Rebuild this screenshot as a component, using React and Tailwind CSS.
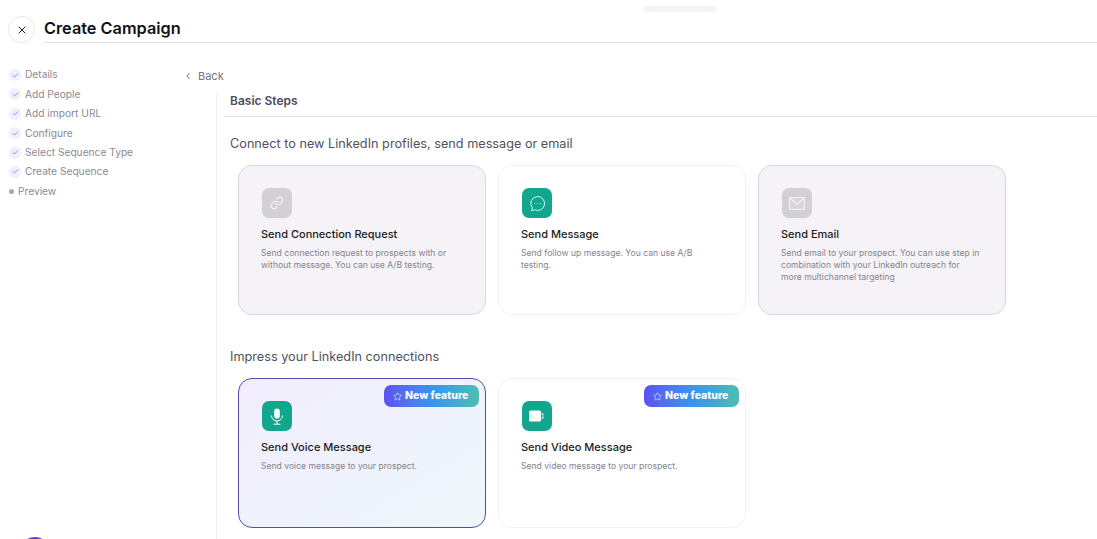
import React from 'react';
import { X, ChevronLeft, Check, Link, Star } from 'lucide-react';

const steps = ['Details', 'Add People', 'Add import URL', 'Configure', 'Select Sequence Type', 'Create Sequence'];

function MessageIcon() {
  return (
    <svg width="17" height="17" viewBox="0 0 17 17" fill="none" stroke="#d9f5f0" strokeWidth="1">
      <path d="M8.5 1.5a7 7 0 1 1-3 13.3L2.6 15.6l.7-2.8A7 7 0 0 1 8.5 1.5z" strokeLinejoin="round" />
      <circle cx="5.6" cy="8.5" r="0.5" fill="#fff" stroke="none" />
      <circle cx="8.5" cy="8.5" r="0.5" fill="#fff" stroke="none" />
      <circle cx="11.4" cy="8.5" r="0.5" fill="#fff" stroke="none" />
    </svg>
  );
}

function MailIcon() {
  return (
    <svg width="16" height="13" viewBox="0 0 16 13" fill="none" stroke="#f3f1f4" strokeWidth="1.2">
      <rect x="0.6" y="0.6" width="14.8" height="11.8" fill="#efedf0" fillOpacity="0.15" />
      <path d="M1 1.2l7 6 7-6" />
    </svg>
  );
}

function MicIcon() {
  return (
    <svg width="14" height="17" viewBox="0 0 14 17" fill="none" stroke="#fff" strokeWidth="1">
      <rect x="4.2" y="0.5" width="5.6" height="10" rx="2.8" fill="#fff" stroke="none" />
      <path d="M1.5 7.5a5.5 5.5 0 0 0 11 0M7 13v3M3.5 16.2h7" />
    </svg>
  );
}

function VideoIcon() {
  return (
    <svg width="16" height="12" viewBox="0 0 16 12" fill="none">
      <rect x="0" y="0.5" width="12" height="11" rx="1.5" fill="#fff" />
      <path d="M12 4.5l2-1.2v5.4l-2-1.2" stroke="#d9f5f0" strokeWidth="0.9" />
    </svg>
  );
}

function LinkIcon() {
  return <Link size={14} strokeWidth={2} color="#f5f3f7" />;
}

function Badge() {
  return (
    <div className="absolute top-[6px] right-[6px] h-[22px] w-[95px] rounded-[7px] bg-gradient-to-r from-[#5a51f0] via-[#3b93ee] to-[#4fbdb0] flex items-center pl-[9px] gap-[3px] text-white">
      <Star size={9} strokeWidth={1.5} />
      <span className="text-[10.5px] font-extrabold">New feature</span>
    </div>
  );
}

function Card({ icon: Icon, title, desc, tone, badge }) {
  const toneClass = tone === 'disabled'
    ? 'bg-[#f5f3f7] border-[#d9d6dc]'
    : tone === 'selected'
      ? 'bg-gradient-to-br from-[#f2edfd] to-[#edf7fb] border-[#5b48b8]'
      : 'bg-white border-[#f3f1f5]';
  return (
    <div className={`relative w-[248px] h-[150px] shrink-0 border rounded-[14px] pt-[22px] pl-[22px] pr-[24px] ${toneClass}`}>
      {badge && <Badge />}
      <div className={`ml-[1px] w-[30px] h-[30px] rounded-[7px] flex items-center justify-center ${tone === 'disabled' ? 'bg-[#d2d0d3]' : 'bg-[#12a68f]'}`}>
        <Icon />
      </div>
      <div className="mt-[8px] text-[11px] leading-[16px] font-medium text-[#1b1b22]">{title}</div>
      <p className="mt-[5px] text-[8.6px] leading-[12px] text-[#85838c]">{desc}</p>
    </div>
  );
}

export default function App() {
  return (
    <div className="relative h-[539px] w-[1097px] overflow-hidden bg-white flex flex-col" style={{ fontFamily: 'Inter, "Noto Sans", sans-serif' }}>
      <div className="absolute left-[643px] top-[6px] w-[74px] h-[6px] rounded-full bg-[#f5f3f7]" />

      <header className="flex items-start pl-[8px] pt-[16px] h-[44px] shrink-0">
        <button className="w-[27px] h-[27px] rounded-full border border-[#e8e6ec] flex items-center justify-center text-[#1b1b22] shrink-0">
          <X size={12} strokeWidth={2} />
        </button>
        <div className="ml-[9px] flex-1 h-[27px] border-b border-[#e2e2e4] text-[16.3px] leading-[24px] font-semibold text-[#111116]">
          Create Campaign
        </div>
      </header>

      <div className="flex flex-1 min-h-0">
        <aside className="w-[185px] shrink-0 pl-[9px] pt-[25px] flex flex-col">
          <ul className="flex flex-col gap-[7.4px]">
            {steps.map((s) => (
              <li key={s} className="flex items-center h-[12px] gap-[4px] text-[10.2px] text-[#8c8a93]">
                <span className="w-[12px] h-[12px] rounded-full bg-[#eef0fd] flex items-center justify-center text-[#5b72d8]">
                  <Check size={7} strokeWidth={2.5} />
                </span>
                {s}
              </li>
            ))}
            <li className="flex items-center h-[12px] gap-[4px] text-[10.2px] text-[#8c8a93]">
              <span className="w-[5px] h-[5px] rounded-full bg-[#a9a8ae]" />
              Preview
            </li>
          </ul>
          <div className="mt-auto ml-[10px] -mb-[30px] w-[32px] h-[32px] rounded-full bg-[#6d3bd0]" />
        </aside>

        <main className="flex-1 min-w-0 flex flex-col">
          <div className="flex items-center h-[14px] mt-[25px] -ml-[2px] text-[11px] text-[#77757f] gap-[5px]">
            <ChevronLeft size={10} strokeWidth={2} className="text-[#4a4c5d]" />
            Back
          </div>
          <div className="flex-1 min-h-0 ml-[31px] mt-[11px] border-l border-[#f1f0f3]">
            <div className="ml-[7px] h-[23px] border-b border-[#e4e4e7] pl-[6px] pt-[1px] text-[12px] leading-[12px] font-semibold text-[#4a4c5d]">
              Basic Steps
            </div>
            <div className="pl-[13px] pt-[18px]">
              <h2 className="text-[12.7px] leading-[18px] font-normal text-[#4f5160]">Connect to new LinkedIn profiles, send message or email</h2>
              <div className="flex gap-[12px] mt-[12px] ml-[8px]">
                <Card tone="disabled" icon={LinkIcon} title="Send Connection Request" desc="Send connection request to prospects with or without message. You can use A/B testing." />
                <Card icon={MessageIcon} title="Send Message" desc="Send follow up message. You can use A/B testing." />
                <Card tone="disabled" icon={MailIcon} title="Send Email" desc="Send email to your prospect. You can use step in combination with your LinkedIn outreach for more multichannel targeting" />
              </div>
              <h2 className="mt-[33px] text-[12.7px] leading-[18px] font-normal text-[#4f5160]">Impress your LinkedIn connections</h2>
              <div className="flex gap-[12px] mt-[12px] ml-[8px]">
                <Card tone="selected" badge icon={MicIcon} title="Send Voice Message" desc="Send voice message to your prospect." />
                <Card badge icon={VideoIcon} title="Send Video Message" desc="Send video message to your prospect." />
              </div>
            </div>
          </div>
        </main>
      </div>
    </div>
  );
}
